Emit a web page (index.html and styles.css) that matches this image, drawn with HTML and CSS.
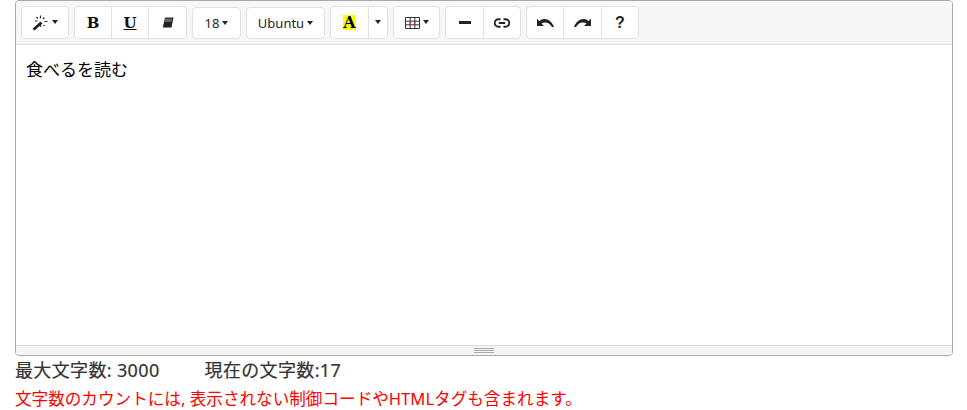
FILE: index.html
```html
<!DOCTYPE html>
<html lang="ja">
<head>
  <meta charset="UTF-8" />
  <title>Editor</title>
  <link rel="stylesheet" href="styles.css">
</head>
<body>

  <div class="editor">
    <div class="toolbar">
      <button class="btn w48">
        <svg width="17" height="16" viewBox="0 0 17 16"><path d="M.5 13.800 8.500 6.500l2 2-8 7z" fill="#222"/><path d="M8.500.5v3M8.500 10v2M12.500 6.500h3M3 6h2.500M4.500 2l1.500 1.500M12.500 2.500 11 4M12.500 11l-1-1" stroke="#333" stroke-width="1.200" fill="none"/></svg><span class="caret"></span>
      </button>
      <div class="group">
        <button class="btn w38"><b class="serif">B</b></button>
        <button class="btn w38"><b class="serif under">U</b></button>
        <button class="btn w39">
          <svg width="12" height="11" viewBox="0 0 12 11"><path d="M3 .5h8.500L9.500 10.500H.8z" fill="#222"/><path d="M3.200 1.500h7L9.500 5H2.500z" fill="#fff" opacity=".3"/></svg>
        </button>
      </div>
      <button class="btn low w49">18<span class="caret"></span></button>
      <button class="btn low w79">Ubuntu<span class="caret"></span></button>
      <div class="group">
        <button class="btn w39"><b class="serif color-a">A</b></button>
        <button class="btn w20"><span class="caret solo"></span></button>
      </div>
      <button class="btn w47">
        <svg width="15" height="12" viewBox="0 0 15 12"><path d="M.5.500h14v11H.5zM.5 4.200h14M.5 7.800h14M5.200.500v11M9.800.500v11" stroke="#333" fill="none"/><path d="M5.200 4.200v3.600M9.800 4.200v3.600" stroke="#a33" fill="none"/></svg><span class="caret"></span>
      </button>
      <div class="group">
        <button class="btn w39"><svg width="12" height="3" viewBox="0 0 12 3"><path d="M0 0h12v3H0z" fill="#222"/></svg></button>
        <button class="btn w38">
          <svg width="16" height="10" viewBox="0 0 16 10"><path d="M6.500 1.200H4.500a3.800 3.800 0 0 0 0 7.600h2M9.500 1.200h2a3.800 3.800 0 0 1 0 7.600h-2M4.800 5h6.400" stroke="#222" stroke-width="1.900" fill="none"/></svg>
        </button>
      </div>
      <div class="group">
        <button class="btn w38">
          <svg width="17" height="9" viewBox="0 0 17 9"><path d="M0 1v7h7L4.500 5.500C8 3.700 12 4 15 9h2C14.500 2 7.500-1.500 2.500 3z" fill="#222"/></svg>
        </button>
        <button class="btn w39">
          <svg width="17" height="9" viewBox="0 0 17 9"><path d="M17 1v7h-7l2.500-2.500C9 3.700 5 4 2 9H0C2.500 2 9.500-1.500 14.500 3z" fill="#222"/></svg>
        </button>
        <button class="btn w38"><b class="help">?</b></button>
      </div>
    </div>

    <div class="content">食べるを読む</div>

    <div class="resizer">
      <span class="grip"></span>
    </div>
  </div>

  <div class="count">
    <span>最大文字数: 3000</span>
    <span>現在の文字数:17</span>
  </div>
  <p class="note">文字数のカウントには, 表示されない制御コードやHTMLタグも含まれます。</p>

</body>
</html>
```

FILE: styles.css
```css
* {
  margin: 0;
  padding: 0;
  box-sizing: border-box;
}

body {
  background-color: white;
  color: #333;
  padding: 0 14px 0 15px;
  font-family: "Noto Sans", "Noto Sans CJK JP", sans-serif;
}

.editor {
  height: 356px;
  border: 1px solid #a9a9a9;
  border-radius: 4px;
  display: flex;
  flex-direction: column;
}

.toolbar {
  height: 44px;
  padding: 5px 5px 0;
  background-color: #f7f7f7;
  border-bottom: 1px solid #ddd;
  border-radius: 3px 3px 0 0;
  display: flex;
  align-items: flex-start;
  gap: 5px;
}

.group {
  display: flex;
}

.btn {
  height: 33px;
  background-color: white;
  border: 1px solid #dee2e6;
  border-radius: 4px;
  color: #212529;
  font-family: "Noto Sans", sans-serif;
  font-size: 13px;
  display: flex;
  align-items: center;
  justify-content: center;
}

.group .btn {
  border-radius: 0;
  margin-left: -1px;
}

.group .btn:first-child {
  border-radius: 4px 0 0 4px;
  margin-left: 0;
}

.group .btn:last-child {
  border-radius: 0 4px 4px 0;
}

.low {
  height: 32px;
  margin-top: 1px;
}

.w20 { width: 20px; }
.w38 { width: 38px; }
.w39 { width: 39px; }
.w47 { width: 47px; }
.w48 { width: 48px; }
.w49 { width: 49px; }
.w79 { width: 79px; }

.caret {
  width: 0;
  height: 0;
  margin-left: 3px;
  margin-bottom: 1px;
  border-top: 4px solid #212529;
  border-left: 3px solid transparent;
  border-right: 3px solid transparent;
}

.caret.solo {
  margin-left: 0;
}

.serif {
  font-family: "DejaVu Serif", serif;
  font-size: 15px;
  color: #111;
}

.under {
  text-decoration: underline;
}

.color-a {
  background-color: yellow;
  color: black;
  font-size: 16px;
  line-height: 15px;
  width: 13px;
  text-align: center;
}

.help {
  font-family: "Liberation Sans", sans-serif;
  font-size: 16px;
  color: #222;
}

.content {
  flex: 1;
  padding: 11px 10px;
  background-color: white;
  color: black;
  font-size: 17px;
  line-height: 27px;
}

.resizer {
  height: 10px;
  background-color: #f5f5f5;
  border-top: 1px solid #ddd;
  border-radius: 0 0 3px 3px;
  display: flex;
  justify-content: center;
  align-items: center;
}

.grip {
  width: 20px;
  height: 5px;
  border-top: 1px solid #a9a9a9;
  border-bottom: 1px solid #a9a9a9;
  background: linear-gradient(#a9a9a9, #a9a9a9) center / 100% 1px no-repeat;
}

.count {
  margin-top: 2px;
  display: flex;
  gap: 45px;
  font-size: 18px;
  line-height: 24px;
  letter-spacing: 0.35px;
  -webkit-text-stroke: 0.2px #333;
  color: #333;
}

.note {
  margin-top: 5px;
  font-size: 16.6px;
  line-height: 24px;
  color: red;
}
```
